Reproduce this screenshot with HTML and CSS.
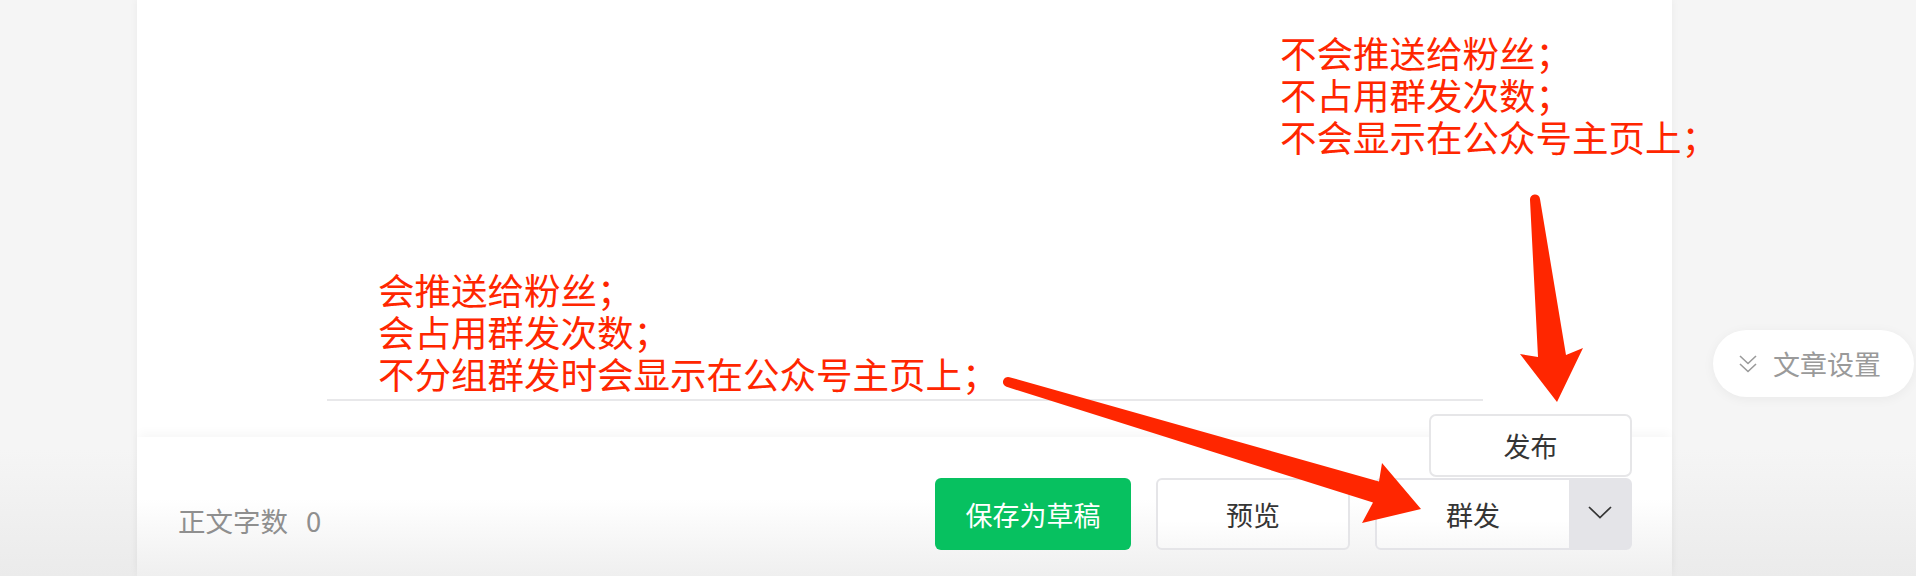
FILE: index.html
```html
<!DOCTYPE html>
<html lang="zh-CN">
<head>
    <meta charset="UTF-8">
    <meta name="viewport" content="width=device-width, initial-scale=1.0">
    <title>图文编辑</title>
    <link rel="stylesheet" href="styles.css">
</head>
<body>

    <div class="page">
        <!-- 编辑区 -->
        <main class="editor">
            <div class="editor-body">
                <div class="content"></div>
            </div>

            <footer class="editor-footer">
                <div class="word-count">正文字数<span class="count">0</span></div>

                <div class="actions">
                    <button class="btn btn-primary">保存为草稿</button>
                    <button class="btn btn-default">预览</button>

                    <div class="split">
                        <div class="split-menu">
                            <div class="split-menu-item">发布</div>
                        </div>
                        <button class="split-main">群发</button>
                        <button class="split-toggle">
                            <svg width="24" height="13" viewBox="0 0 24 13">
                                <polyline points="1,1 12,11.5 23,1" fill="none" stroke="#353535" stroke-width="1.7"/>
                            </svg>
                        </button>
                    </div>
                </div>
            </footer>
        </main>

        <!-- 右侧设置 -->
        <aside class="side">
            <div class="setting-pill">
                <svg class="setting-icon" width="18" height="18" viewBox="0 0 18 18">
                    <polyline points="1,1 9,8.5 17,1" fill="none" stroke="#9a9a9a" stroke-width="1.6"/>
                    <polyline points="1,9 9,16.5 17,9" fill="none" stroke="#9a9a9a" stroke-width="1.6"/>
                </svg>
                <span>文章设置</span>
            </div>
        </aside>
    </div>

    <!-- 标注 -->
    <div class="note note-left">
        <div class="note-line">会推送给粉丝；</div>
        <div class="note-line">会占用群发次数；</div>
        <div class="note-line">不分组群发时会显示在公众号主页上；</div>
    </div>
    <div class="note note-right">
        <div class="note-line">不会推送给粉丝；</div>
        <div class="note-line">不占用群发次数；</div>
        <div class="note-line">不会显示在公众号主页上；</div>
    </div>

    <svg class="arrows" width="1916" height="576" viewBox="0 0 1916 576">
        <path d="M1530,200 L1538,357 L1520,354 L1557,402 L1583,348 L1566,355 L1540,199 A5,5 0 0 0 1530,200 Z" fill="#ff2600"/>
        <path d="M1009.5,377.2 L1379,481.5 L1382,463 L1421,509 L1362,523 L1373,502.5 L1006.5,386.8 A5,5 0 0 1 1009.5,377.2 Z" fill="#ff2600"/>
    </svg>

</body>
</html>
```

FILE: styles.css
```css
body {
    margin: 0;
    width: 1916px;
    height: 576px;
    overflow: hidden;
    position: relative;
    font-family: "Noto Sans CJK SC", "Noto Sans", sans-serif;
    background: linear-gradient(to bottom, #f5f5f5 0%, #f5f5f5 78%, #ebebeb 100%);
}

.page {
    display: flex;
    height: 576px;
    padding-left: 137px;
}

/* 编辑区 */
.editor {
    width: 1535px;
    display: flex;
    flex-direction: column;
    background-color: #fff;
    box-shadow: 0 0 8px rgba(0, 0, 0, 0.05);
}

.editor-body {
    height: 437px;
    flex: none;
}

.content {
    width: 1156px;
    height: 399px;
    margin: 0 auto;
    border-bottom: 2px solid #e8e8ea;
}

.editor-footer {
    flex: 1;
    display: flex;
    justify-content: space-between;
    align-items: flex-start;
    padding: 41px 40px 0 41px;
    background: linear-gradient(to bottom, #fff 0%, #fff 45%, #efefef 100%);
    box-shadow: 0 -6px 10px -2px rgba(0, 0, 0, 0.035);
}

.word-count {
    margin-top: 24px;
    font-size: 27.5px;
    line-height: 36px;
    color: #8f8f8f;
}

.count {
    margin-left: 18px;
}

.actions {
    display: flex;
    gap: 25px;
}

.btn {
    height: 72px;
    box-sizing: border-box;
    border-radius: 6px;
    font-family: inherit;
    font-size: 27px;
    padding: 0;
    cursor: pointer;
}

.btn-primary {
    width: 196px;
    background-color: #07c160;
    color: #fff;
    border: none;
}

.btn-default {
    width: 194px;
    background: linear-gradient(to bottom, #fff 0%, #fff 60%, #f8f8f8 100%);
    color: #353535;
    border: 2px solid #e5e5e8;
}

/* 群发按钮 */
.split {
    position: relative;
    display: flex;
    width: 257px;
    height: 72px;
    box-sizing: border-box;
    border: 2px solid #e4e4e8;
    border-radius: 6px;
    background-color: #e4e4e8;
}

.split-main {
    width: 192px;
    border: none;
    border-radius: 4px 0 0 4px;
    background: linear-gradient(to bottom, #fff 0%, #fff 60%, #f8f8f8 100%);
    font-family: inherit;
    font-size: 27px;
    color: #353535;
    padding: 0;
}

.split-toggle {
    flex: 1;
    border: none;
    background: transparent;
    display: flex;
    align-items: center;
    justify-content: center;
    padding: 0 0 4px 0;
}

.split-menu {
    position: absolute;
    right: -2px;
    bottom: calc(100% + 3px);
    width: 203px;
    height: 63px;
    box-sizing: border-box;
    border: 2px solid #e6e6e8;
    border-radius: 7px;
    background-color: #fff;
}

.split-menu-item {
    height: 100%;
    display: flex;
    align-items: center;
    justify-content: center;
    font-size: 27px;
    color: #353535;
}

/* 右侧设置 */
.side {
    padding: 330px 0 0 41px;
}

.setting-pill {
    display: flex;
    align-items: center;
    height: 67px;
    box-sizing: border-box;
    padding: 0 33px 0 26px;
    border-radius: 34px;
    background-color: #fff;
    box-shadow: 0 2px 12px rgba(0, 0, 0, 0.05);
    font-size: 27px;
    color: #9a9a9a;
    white-space: nowrap;
}

.setting-icon {
    margin-right: 16px;
    margin-top: 1px;
}

/* 标注 */
.note {
    position: absolute;
    color: #ff2600;
    font-size: 36.5px;
    white-space: nowrap;
}

.note-line {
    height: 42px;
    line-height: 42px;
}

.note-left {
    left: 378px;
    top: 269px;
}

.note-right {
    left: 1280px;
    top: 32px;
}

.arrows {
    position: absolute;
    left: 0;
    top: 0;
    pointer-events: none;
}
```
